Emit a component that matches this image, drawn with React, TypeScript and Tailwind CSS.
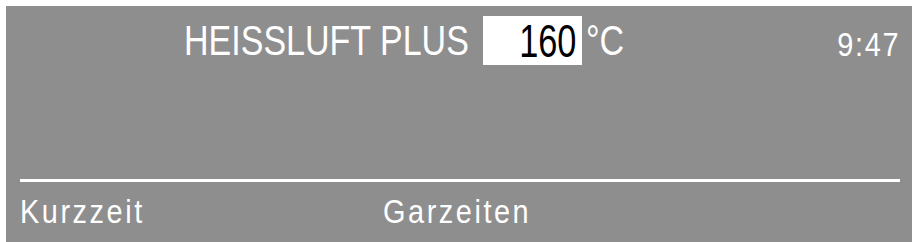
import React from "react";

// Oven display: mode header, set temperature, clock and soft-key labels
const font = { fontFamily: '"Liberation Sans", Arial, sans-serif' };

export default function App() {
  return (
    <div className="w-[915px] h-[242px] bg-white pl-[6px] pt-[6px] pr-[3px] overflow-hidden" style={font}>
      <div className="h-full bg-[#8e8e8e] text-white flex flex-col">
        {/* header row */}
        <div className="flex items-start mt-[10px] h-[49px]">
          <div className="ml-[178px] w-[299px] text-[42px] leading-[49px] whitespace-nowrap">
            <span className="inline-block origin-left scale-x-[0.81]">HEISSLUFT PLUS</span>
          </div>
          <div className="w-[99px] h-[49px] bg-white text-black text-[47px] leading-[49px] text-right pr-[6px] whitespace-nowrap">
            <span className="inline-block origin-right scale-x-[0.73]">160</span>
          </div>
          <div className="ml-[4px] w-[50px] text-[42px] leading-[49px] whitespace-nowrap">
            <span className="inline-block origin-left scale-x-[0.81]">°C</span>
          </div>
          <div className="flex-1" />
          <div className="mt-[4px] mr-[12px] text-[34px] leading-[49px] tracking-[2px] whitespace-nowrap">
            <span className="inline-block origin-right scale-x-[0.85]">9:47</span>
          </div>
        </div>

        {/* divider */}
        <div className="mt-[114px] ml-[14px] mr-[12px] h-[3px] bg-white" />

        {/* soft-key labels */}
        <div className="flex mt-[12px] pl-[14px] text-[34px] leading-[34px] tracking-[3px] whitespace-nowrap">
          <div className="w-[363px]">
            <span className="inline-block origin-left scale-x-[0.85]">Kurzzeit</span>
          </div>
          <div>
            <span className="inline-block origin-left scale-x-[0.85]">Garzeiten</span>
          </div>
        </div>
      </div>
    </div>
  );
}
